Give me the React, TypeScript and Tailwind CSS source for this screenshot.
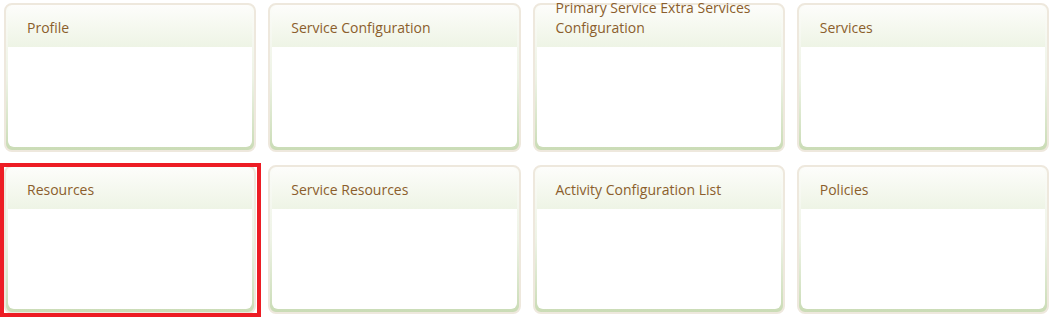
import React from 'react';

interface Tile {
  title: string;
  selected?: boolean;
}

const tiles: Tile[] = [
  { title: 'Profile' },
  { title: 'Service Configuration' },
  { title: 'Primary Service Extra Services Configuration' },
  { title: 'Services' },
  { title: 'Resources', selected: true },
  { title: 'Service Resources' },
  { title: 'Activity Configuration List' },
  { title: 'Policies' },
];

function TileCard({ tile }: { tile: Tile }) {
  return (
    <div className="relative flex h-[149px] flex-col rounded-[8px] border-2 border-[#eee8dd] bg-gradient-to-b from-[#fbfcf8] via-[#eef3e6] to-[#cadcb6] px-[2px] pb-[3px]">
      <div className="flex h-[42px] shrink-0 items-end rounded-t-[6px] bg-gradient-to-b from-[#fdfdfb] to-[#eef4e5] pb-[9px] pl-[19px] pr-4">
        <span className="text-[14px] leading-[20px] text-[#8b5e2c]" style={{ fontFamily: '"Open Sans", sans-serif' }}>
          {tile.title}
        </span>
      </div>
      <div className="flex-1 rounded-b-[6px] bg-white" />
      {/* selection frame */}
      {tile.selected && (
        <div className="pointer-events-none absolute -bottom-[5px] -left-[6px] -right-[7px] -top-[4px] border-4 border-[#ed1c24]" />
      )}
    </div>
  );
}

export default function App() {
  return (
    <div className="h-[318px] w-[1057px] overflow-hidden bg-white">
      <div className="grid w-[1049px] grid-cols-4 gap-x-[12px] gap-y-[13px] pl-[4px] pt-[3px]">
        {tiles.map(t => (
          <TileCard key={t.title} tile={t} />
        ))}
      </div>
    </div>
  );
}
